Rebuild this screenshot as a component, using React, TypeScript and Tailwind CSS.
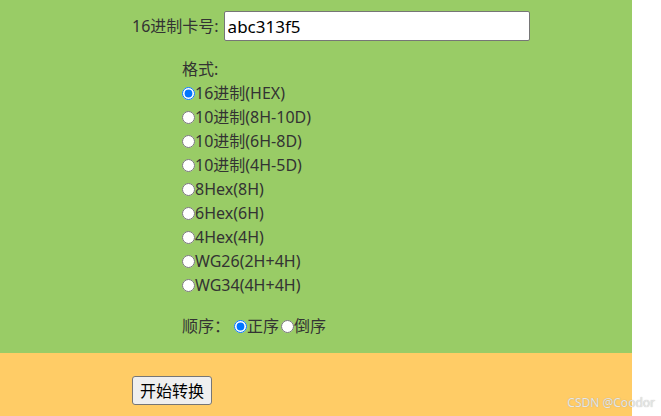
const formats = [
  "16进制(HEX)",
  "10进制(8H-10D)",
  "10进制(6H-8D)",
  "10进制(4H-5D)",
  "8Hex(8H)",
  "6Hex(6H)",
  "4Hex(4H)",
  "WG26(2H+4H)",
  "WG34(4H+4H)",
];

const font = { fontFamily: '"Noto Sans", "Noto Sans CJK SC", sans-serif' };

export default function App() {
  return (
    <div className="flex w-[661px] h-[416px] bg-white text-[16px] leading-[24px] text-[#333]" style={font}>
      <div className="flex flex-col w-[632px]">
        <div className="h-[353px] bg-[#99cc66] pl-[132px] pt-[11px]">
          <div className="flex items-center h-[30px]">
            <span>16进制卡号:</span>
            <input
              defaultValue="abc313f5"
              className="ml-[5px] w-[306px] h-[30px] px-[3px] bg-white border border-[#767676] rounded-[2px] text-black text-[17px] outline-none"
              style={font}
            />
          </div>

          <div className="pl-[50px] mt-[16px]">
            <div>格式:</div>
            {formats.map((f, i) => (
              <label key={f} className="flex items-center h-[24px]">
                <input
                  type="radio"
                  name="format"
                  defaultChecked={i === 0}
                  className="m-0 w-[13px] h-[13px]"
                />
                <span>{f}</span>
              </label>
            ))}

            <div className="flex items-center h-[24px] mt-[17px]">
              <span>顺序：</span>
              <label className="flex items-center ml-[4px]">
                <input type="radio" name="order" defaultChecked className="m-0 w-[13px] h-[13px]" />
                <span>正序</span>
              </label>
              <label className="flex items-center ml-[2px]">
                <input type="radio" name="order" className="m-0 w-[13px] h-[13px]" />
                <span>倒序</span>
              </label>
            </div>
          </div>
        </div>

        <div className="h-[63px] bg-[#ffcc66] pl-[132px] pt-[23px]">
          <button
            className="w-[80px] h-[29px] bg-[#efefef] border border-[#767676] rounded-[3px] text-black text-[16px]"
            style={font}
          >
            开始转换
          </button>
        </div>
      </div>

      <div className="relative flex-1">
        <span className="absolute right-[6px] bottom-[7px] whitespace-nowrap text-[12px] leading-none text-[#e8e8e8]" style={{ textShadow: "0 0 1px rgba(120,120,120,0.6)" }}>
          CSDN @Coodor
        </span>
      </div>
    </div>
  );
}
